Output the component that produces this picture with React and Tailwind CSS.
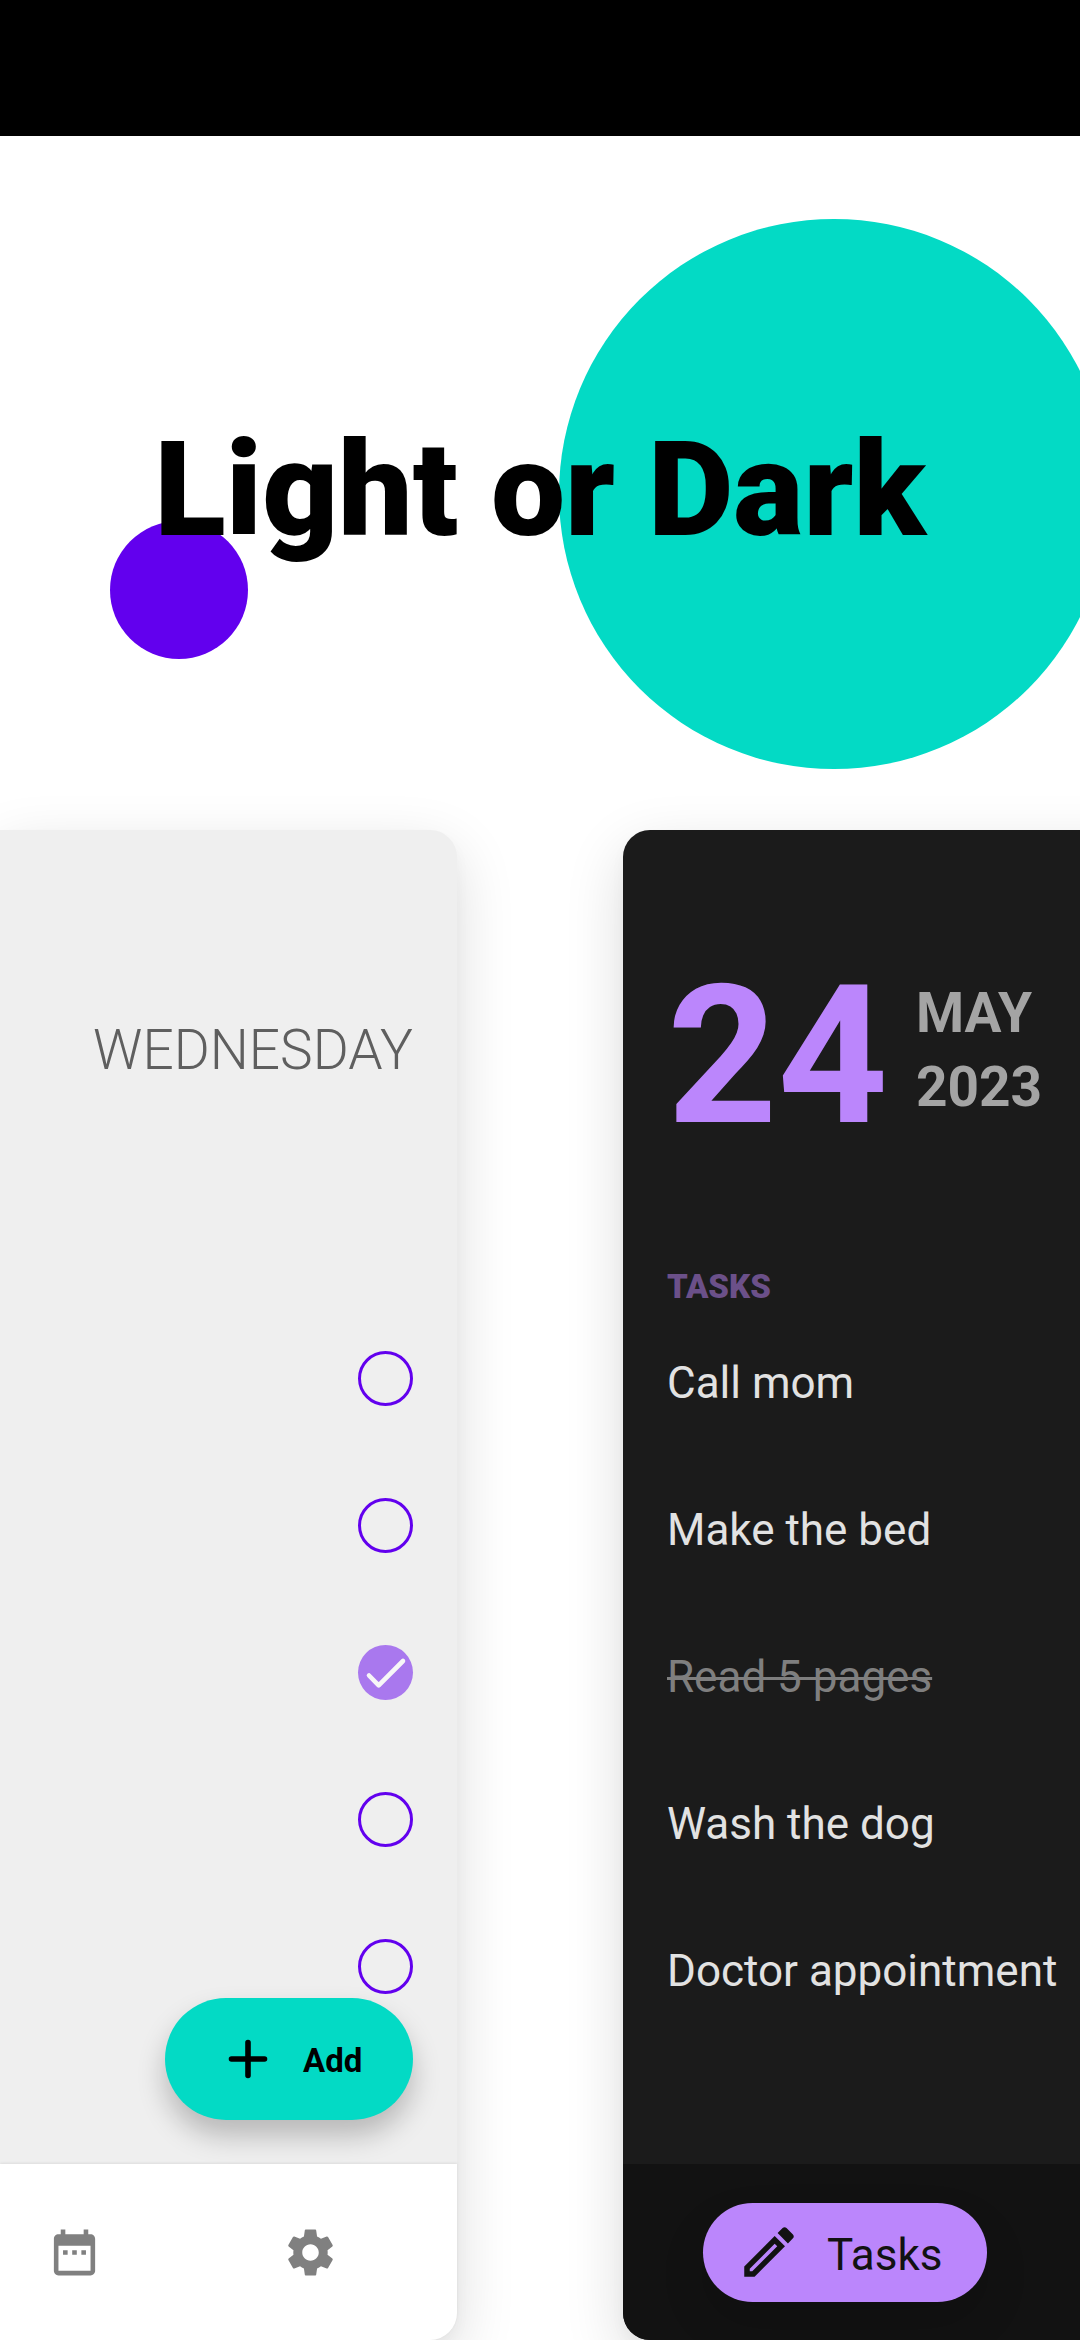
const TASKS = [
  { label: "Call mom", done: false },
  { label: "Make the bed", done: false },
  { label: "Read 5 pages", done: true },
  { label: "Wash the dog", done: false },
  { label: "Doctor appointment", done: false },
];

function CalendarIcon() {
  return (
    <svg viewBox="0 0 24 24" className="size-[55px] shrink-0" fill="#808080">
      <path d="M9 11H7v2h2v-2zm4 0h-2v2h2v-2zm4 0h-2v2h2v-2zm2-7h-1V2h-2v2H8V2H6v2H5c-1.11 0-1.99.9-1.99 2L3 20c0 1.1.89 2 2 2h14c1.1 0 2-.9 2-2V6c0-1.1-.9-2-2-2zm0 16H5V9h14v11z" />
    </svg>
  );
}

function GearIcon() {
  return (
    <svg viewBox="0 0 24 24" className="size-[55px] shrink-0" fill="#808080">
      <path d="M19.43 12.98c.04-.32.07-.64.07-.98s-.03-.66-.07-.98l2.11-1.65c.19-.15.24-.42.12-.64l-2-3.46c-.12-.22-.39-.3-.61-.22l-2.49 1c-.52-.4-1.08-.73-1.69-.98l-.38-2.65C14.46 2.18 14.25 2 14 2h-4c-.25 0-.46.18-.49.42l-.38 2.65c-.61.25-1.17.59-1.69.98l-2.49-1c-.23-.09-.49 0-.61.22l-2 3.46c-.13.22-.07.49.12.64l2.11 1.65c-.04.32-.07.65-.07.98s.03.66.07.98l-2.11 1.65c-.19.15-.24.42-.12.64l2 3.46c.12.22.39.3.61.22l2.49-1c.52.4 1.08.73 1.69.98l.38 2.65c.03.24.24.42.49.42h4c.25 0 .46-.18.49-.42l.38-2.65c.61-.25 1.17-.59 1.69-.98l2.49 1c.23.09.49 0 .61-.22l2-3.46c.12-.22.07-.49-.12-.64l-2.11-1.65zM12 15.6c-1.99 0-3.6-1.61-3.6-3.6s1.61-3.6 3.6-3.6 3.6 1.61 3.6 3.6-1.61 3.6-3.6 3.6z" />
    </svg>
  );
}

function PencilIcon() {
  return (
    <svg viewBox="0 0 24 24" className="size-[66px] shrink-0" fill="#121212">
      <path d="M14.06 9L15 9.94 5.92 19H5v-.92L14.06 9m3.6-6c-.25 0-.51.1-.7.29l-1.83 1.83 3.75 3.75 1.83-1.83c.39-.39.39-1.04 0-1.41l-2.34-2.34c-.2-.2-.45-.29-.71-.29m-3.6 3.19L3 17.25V21h3.75L17.81 9.94l-3.75-3.75z" />
    </svg>
  );
}

function Check({ done }) {
  if (!done) {
    return <div className="size-[55px] rounded-full border-[3px] border-[#6200ee]" />;
  }
  return (
    <div className="size-[55px] rounded-full bg-[#a978ee]">
      <svg viewBox="0 0 55 55" className="size-[55px]" fill="none" stroke="#f7f7f7" strokeWidth="4.6" strokeLinecap="round" strokeLinejoin="round">
        <path d="M11 30.5 20.7 40.3 45 16" />
      </svg>
    </div>
  );
}

export default function App() {
  return (
    <div className="flex h-[2340px] w-[1080px] flex-col overflow-hidden bg-white font-['Roboto',sans-serif]">
      <div className="h-[136px] shrink-0 bg-black" />

      <header className="relative flex h-[694px] shrink-0 items-center justify-center pt-[15px]">
        <div className="absolute left-[559px] top-[83px] size-[550px] rounded-full bg-[#03dac5]" />
        <div className="absolute left-[110px] top-[385px] size-[138px] rounded-full bg-[#6200ee]" />
        <h1 className="relative whitespace-nowrap text-[132px] font-black leading-[155px] text-black">Light or Dark</h1>
      </header>

      <main className="flex h-[1510px] shrink-0 gap-[166px]">
        <section className="flex w-[457px] shrink-0 flex-col rounded-r-[27px] bg-[#efefef] shadow-[0_20px_60px_rgba(0,0,0,0.14),0_8px_16px_rgba(0,0,0,0.03)]">
          <div className="relative flex h-[1334px] flex-col items-end pr-[44px] pt-[188px]">
            <div className="h-[65px] text-[55px] font-light leading-[65px] text-[#5f5f5f]">WEDNESDAY</div>
            <div className="mt-[268px] flex flex-col gap-[92px]">
              {TASKS.map((t) => (
                <Check key={t.label} done={t.done} />
              ))}
            </div>
            <button className="absolute right-[44px] top-[1168px] flex h-[122px] w-[248px] items-center rounded-full bg-[#03dac5] pl-[62px] text-black shadow-[0_16px_28px_rgba(0,0,0,0.23)]">
              <svg viewBox="0 0 42 42" className="size-[42px]" fill="none" stroke="#000" strokeWidth="5.6" strokeLinecap="round">
                <path d="M21 4.5v33M4.5 21h33" />
              </svg>
              <span className="ml-[34px] pt-[3px] text-[33px] font-bold leading-[40px]">Add</span>
            </button>
          </div>
          <nav className="relative flex h-[176px] items-center gap-[181px] rounded-br-[27px] bg-white pl-[47px] shadow-[0_-1px_3px_rgba(0,0,0,0.08)]">
            <CalendarIcon />
            <GearIcon />
          </nav>
        </section>

        <section className="flex w-[560px] shrink-0 flex-col rounded-l-[27px] bg-[#1b1b1b] shadow-[0_20px_60px_rgba(0,0,0,0.14),0_8px_16px_rgba(0,0,0,0.03)]">
          <div className="flex h-[1334px] flex-col pl-[44px] pt-[113px]">
            <div className="flex h-[226px] items-start">
              <div className="text-[192.5px] font-bold leading-[226px] text-[#bb86fc]">24</div>
              <div className="ml-[28px] mt-[33px] text-[55px] font-bold leading-[74px] text-[#a4a4a4]">
                <div>MAY</div>
                <div>2023</div>
              </div>
            </div>
            <h2 className="mt-[98px] text-[33px] font-black leading-[40px] text-[#6b5089]">TASKS</h2>
            <ul className="mt-[2px]">
              {TASKS.map((t) => (
                <li key={t.label} className="flex h-[147px] items-center whitespace-nowrap text-[44px]">
                  <span className={t.done ? "text-[#7f7f7f] line-through decoration-[3px]" : "text-[#e2e2e2]"}>{t.label}</span>
                </li>
              ))}
            </ul>
          </div>
          <nav className="flex h-[176px] items-center rounded-bl-[27px] bg-[#121212] pl-[80px]">
            <div className="flex h-[99px] w-[284px] items-center rounded-full bg-[#bb86fc] pl-[33px] shadow-[0_22px_44px_rgba(0,0,0,0.15)]">
              <PencilIcon />
              <span className="ml-[25px] pt-[5px] text-[44px] leading-[52px] text-[#121212]">Tasks</span>
            </div>
          </nav>
        </section>
      </main>
    </div>
  );
}
